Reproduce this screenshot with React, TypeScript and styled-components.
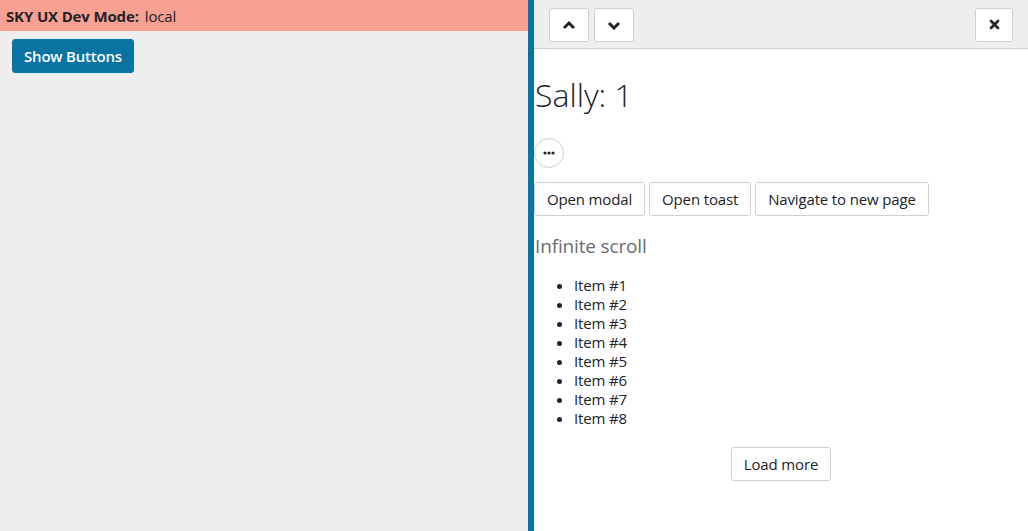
import React from "react";
import styled, { createGlobalStyle } from "styled-components";

const Global = createGlobalStyle`
  html, body { margin: 0; padding: 0; height: 100%; }
  body {
    font-family: "Open Sans", "Liberation Sans", sans-serif;
    font-size: 15px;
    letter-spacing: -0.15px;
    color: #212327;
    background: #eeeeee;
  }
  #root { height: 100%; }
`;

const Page = styled.div`
  display: flex;
  height: 531px;
  width: 1028px;
  overflow: hidden;
`;

const Host = styled.div`
  flex: 1;
  display: flex;
  flex-direction: column;
  background: #eeeeee;
`;

const DevBar = styled.div`
  height: 31px;
  background: #f8a193;
  display: flex;
  align-items: center;
  padding: 0 6px;
  gap: 6px;
  font-size: 15px;
`;

const DevLabel = styled.span`
  font-weight: 700;
`;

const HostBody = styled.div`
  padding: 8px 12px;
`;

const PrimaryButton = styled.button`
  font-family: inherit;
  font-size: 15px;
  letter-spacing: -0.2px;
  font-weight: 600;
  color: #fff;
  background: #0974a1;
  border: 1px solid #0974a1;
  border-radius: 3px;
  height: 34px;
  padding: 0 11px;
  cursor: pointer;
`;

const Flyout = styled.aside`
  width: 494px;
  border-left: 6px solid #0974a1;
  background: #fff;
  display: flex;
  flex-direction: column;
`;

const FlyoutHeader = styled.div`
  height: 49px;
  box-sizing: border-box;
  background: #eeeeee;
  border-bottom: 1px solid #cdcfd2;
  display: flex;
  align-items: center;
  padding: 0 15px 0 15px;
  gap: 5px;
  flex-shrink: 0;
`;

const Spacer = styled.div`
  flex: 1;
`;

const IconButton = styled.button<{ $w: number }>`
  width: ${(p) => p.$w}px;
  height: 34px;
  box-sizing: border-box;
  background: #fff;
  border: 1px solid #cdcfd2;
  border-radius: 3px;
  display: flex;
  align-items: center;
  justify-content: center;
  padding: 0;
  margin-top: 1px;
  color: #212327;
`;

const FlyoutContent = styled.div`
  padding: 0 15px 0 1px;
  display: flex;
  flex-direction: column;
`;

const Title = styled.h1`
  font-family: "Open Sans", sans-serif;
  font-weight: 300;
  font-size: 32px;
  letter-spacing: 0;
  line-height: 40px;
  margin: 26px 0 23px 0;
  color: #212327;
`;

const ContextButton = styled.button`
  width: 30px;
  height: 30px;
  border-radius: 50%;
  border: 1px solid #cdcfd2;
  background: #fff;
  padding: 0;
  display: flex;
  align-items: center;
  justify-content: center;
  margin-left: -1px;
`;

const ButtonRow = styled.div`
  display: flex;
  gap: 4px;
  margin: 14px 0 0 -1px;
`;

const DefaultButton = styled.button`
  font-family: inherit;
  font-size: 15px;
  letter-spacing: -0.15px;
  color: #212327;
  background: #fff;
  border: 1px solid #cdcfd2;
  border-radius: 3px;
  height: 34px;
  padding: 0 12px;
`;

const Subheading = styled.h2`
  font-weight: 400;
  font-size: 19px;
  color: #686c73;
  margin: 18px 0 0 0;
  line-height: 24px;
`;

const List = styled.ul`
  margin: 18px 0 0 0;
  padding-left: 39px;
  line-height: 19px;
`;

const LoadMoreRow = styled.div`
  display: flex;
  justify-content: center;
  margin-top: 19px;
  padding-left: 14px;
`;

const Chevron = ({ up }: { up?: boolean }) => (
  <svg width="14" height="10" viewBox="0 0 14 10">
    <polyline
      points={up ? "2,8 7,3 12,8" : "2,3 7,8 12,3"}
      fill="none"
      stroke="#212327"
      strokeWidth="3"
    />
  </svg>
);

const CloseIcon = () => (
  <svg width="11" height="11" viewBox="0 0 11 11">
    <path d="M2 2 L9 9 M9 2 L2 9" stroke="#212327" strokeWidth="2.8" strokeLinecap="round" />
  </svg>
);

const Dots = () => (
  <svg width="12" height="4" viewBox="0 0 12 4">
    <circle cx="2" cy="2" r="1.6" fill="#212327" />
    <circle cx="6" cy="2" r="1.6" fill="#212327" />
    <circle cx="10" cy="2" r="1.6" fill="#212327" />
  </svg>
);

export default function App() {
  const items = [1, 2, 3, 4, 5, 6, 7, 8];
  return (
    <>
      <Global />
      <Page>
        <Host>
          <DevBar>
            <DevLabel>SKY UX Dev Mode:</DevLabel>
            <span>local</span>
          </DevBar>
          <HostBody>
            <PrimaryButton>Show Buttons</PrimaryButton>
          </HostBody>
        </Host>
        <Flyout>
          <FlyoutHeader>
            <IconButton $w={40} aria-label="Previous">
              <Chevron up />
            </IconButton>
            <IconButton $w={40} aria-label="Next">
              <Chevron />
            </IconButton>
            <Spacer />
            <IconButton $w={38} aria-label="Close">
              <CloseIcon />
            </IconButton>
          </FlyoutHeader>
          <FlyoutContent>
            <Title>Sally: 1</Title>
            <div>
              <ContextButton aria-label="Context menu">
                <Dots />
              </ContextButton>
            </div>
            <ButtonRow>
              <DefaultButton>Open modal</DefaultButton>
              <DefaultButton>Open toast</DefaultButton>
              <DefaultButton>Navigate to new page</DefaultButton>
            </ButtonRow>
            <Subheading>Infinite scroll</Subheading>
            <List>
              {items.map((i) => (
                <li key={i}>Item #{i}</li>
              ))}
            </List>
            <LoadMoreRow>
              <DefaultButton>Load more</DefaultButton>
            </LoadMoreRow>
          </FlyoutContent>
        </Flyout>
      </Page>
    </>
  );
}
